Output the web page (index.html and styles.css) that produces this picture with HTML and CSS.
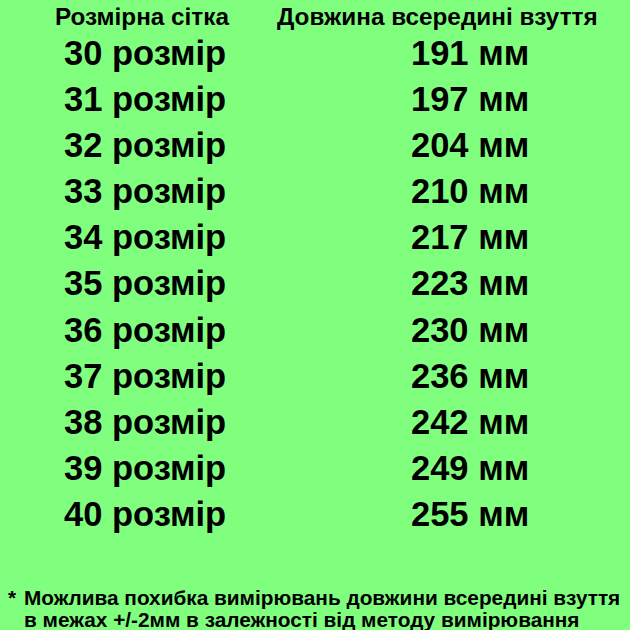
FILE: index.html
```html
<!DOCTYPE html>
<html lang="uk">
<head>
<meta charset="utf-8">
<link rel="stylesheet" href="styles.css">
</head>
<body>
<div class="page">
  <div class="head">
    <div class="h-left">Розмірна сітка</div>
    <div class="h-right">Довжина всередині взуття</div>
  </div>
  <div class="rows">
    <div class="size">30 розмір</div><div class="len">191 мм</div>
    <div class="size">31 розмір</div><div class="len">197 мм</div>
    <div class="size">32 розмір</div><div class="len">204 мм</div>
    <div class="size">33 розмір</div><div class="len">210 мм</div>
    <div class="size">34 розмір</div><div class="len">217 мм</div>
    <div class="size">35 розмір</div><div class="len">223 мм</div>
    <div class="size">36 розмір</div><div class="len">230 мм</div>
    <div class="size">37 розмір</div><div class="len">236 мм</div>
    <div class="size">38 розмір</div><div class="len">242 мм</div>
    <div class="size">39 розмір</div><div class="len">249 мм</div>
    <div class="size">40 розмір</div><div class="len">255 мм</div>
  </div>
  <div class="note">
    <span class="star">*</span>
    <span class="note-text">Можлива похибка вимірювань довжини всередині взуття<br>в межах +/-2мм в залежності від методу вимірювання</span>
  </div>
</div>
</body>
</html>
```
FILE: styles.css
```css
html, body {
  margin: 0;
  padding: 0;
  background: #80ff7f;
}
.page {
  width: 630px;
  height: 630px;
  overflow: hidden;
  font-family: "Liberation Sans", Arial, sans-serif;
  font-weight: bold;
  color: #000;
}
.head {
  display: flex;
  padding: 4px 0 0 55px;
  font-size: 24.3px;
  line-height: 26px;
}
.h-left {
  width: 222px;
}
.rows {
  display: grid;
  grid-template-columns: 347px auto;
  padding-left: 64px;
  font-size: 34.5px;
  line-height: 46.1px;
}
.note {
  display: flex;
  margin-top: 50px;
  padding-left: 8px;
  font-size: 20.8px;
  line-height: 22px;
}
.star {
  width: 16px;
}
```
